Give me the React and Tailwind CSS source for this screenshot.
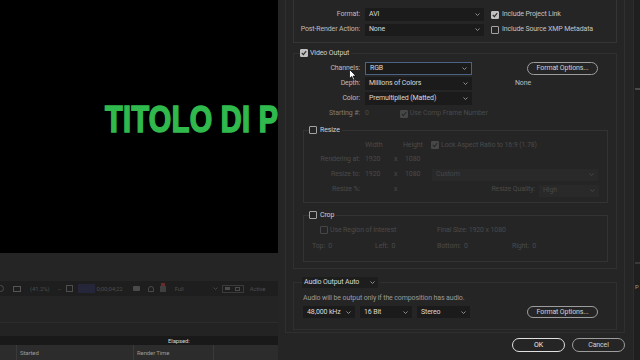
import React from 'react';

const Chevron = ({ color = 'text-[#9a9a9a]' }) => (
  <svg width="5" height="3" viewBox="0 0 5 3" className={color}>
    <polyline points="0.5,0.5 2.5,2.5 4.5,0.5" fill="none" stroke="currentColor" strokeWidth="0.9" />
  </svg>
);

const Check = ({ checked, dim }) => {
  let cls = 'border-[#a3a3a3]';
  if (dim) cls = checked ? 'border-[#474747] bg-[#474747]' : 'border-[#474747]';
  else if (checked) cls = 'border-[#c0c0c0] bg-[#c0c0c0]';
  return (
    <span className={`flex h-[8px] w-[8px] shrink-0 items-center justify-center rounded-[1px] border ${cls}`}>
      {checked && (
        <svg width="6" height="6" viewBox="0 0 6 6">
          <polyline points="0.8,3 2.4,4.6 5.2,1.2" fill="none" stroke={dim ? '#2a2a2a' : '#2b2b2b'} strokeWidth="1.1" />
        </svg>
      )}
    </span>
  );
};

// dropdown field
const Select = ({ value, className, dim }) => (
  <div
    className={`flex items-center justify-between pl-[4px] pr-[4px] ${
      dim ? 'bg-[#292929] text-[#474747]' : 'bg-[#1b1b1b] text-[#dadada]'
    } ${className}`}
  >
    <span>{value}</span>
    <Chevron color={dim ? 'text-[#4a4a4a]' : 'text-[#9a9a9a]'} />
  </div>
);

const PillButton = ({ label, className }) => (
  <div className={`flex items-center justify-center rounded-full border border-[#9d9d9d] text-[#d0d0d0] ${className}`}>
    {label}
  </div>
);

const Cursor = () => (
  <svg width="8" height="12" viewBox="0 0 8 12" className="absolute left-[-16px] top-[7px]">
    <path d="M0.5 0.5 L0.5 9.5 L2.7 7.5 L4.3 11 L5.6 10.4 L4.1 7 L7 7 Z" fill="#ffffff" stroke="#000" strokeWidth="0.7" />
  </svg>
);

const Viewer = () => (
  <div className="flex w-[278px] shrink-0 flex-col">
    <div className="h-[253px] overflow-hidden bg-black pl-[105px] pt-[102px]">
      <div className="origin-left scale-x-[0.8] whitespace-nowrap font-[family-name:'Liberation_Sans',sans-serif] text-[36px] font-bold leading-none tracking-[0.5px] text-[#30b94d] [-webkit-text-stroke:1.6px_#30b94d]">
        TITOLO DI PROGETTO
      </div>
    </div>
    <div className="h-[28px] bg-[#252525]" />
    {/* viewer toolbar */}
    <div className="flex h-[15px] items-center bg-[#1e1e1e] text-[6px] text-[#4d4d4d]">
      <span className="ml-[-3px] h-[7px] w-[7px] rounded-full border border-[#4d4d4d]" />
      <span className="ml-[9px] h-[6px] w-[8px] border border-[#555]" />
      <span className="ml-[9px]">(41.2%)</span>
      <span className="ml-[8px] w-[5px]">–</span>
      <span className="ml-[4px] h-[7px] w-[7px] border border-[#4d4d4d]" />
      <span className="ml-[5px] h-[9px] w-[17px] bg-[#25263a]" />
      <span className="ml-[1px]">0;00;04;22</span>
      <span className="ml-[10px] h-[5px] w-[7px] rounded-[1px] bg-[#4a4a4a]" />
      <span className="ml-[8px] h-[6px] w-[6px] rounded-t-full border border-[#4a4a4a]" />
      <span className="relative ml-[6px] h-[6px] w-[6px] bg-[#3f3f3f]">
        <span className="absolute left-[1px] top-[-3px] h-[3px] w-[4px] bg-[#6a2a2a]" />
      </span>
      <span className="ml-[9px] w-[38px]">Full</span>
      <Chevron color="text-[#4a4a4a]" />
      <span className="ml-[4px] flex h-[8px] w-[22px] items-center justify-around border border-[#3a3a3a]">
        <span className="h-[3px] w-[5px] bg-[#4a4a4a]" />
        <span className="h-[4px] w-[5px] border border-[#4a4a4a]" />
      </span>
      <span className="ml-[6px]">Active</span>
    </div>
    <div className="h-[27px] border-b border-[#2c2c2c] bg-[#242424]" />
    <div className="h-[13px] bg-[#232323]" />
    <div className="flex h-[9px] items-center bg-[#191919] pl-[168px] text-[6px] text-[#d2d2d2]">Elapsed:</div>
    <div className="flex flex-1 items-center bg-[#2c2c2c] text-[6px] text-[#9a9a9a]">
      <span className="ml-[16px] h-full border-l border-[#3a3a3a]" />
      <span className="ml-[3px] w-[113px]">Started</span>
      <span className="h-full border-l border-[#3a3a3a]" />
      <span className="ml-[3px] w-[76px]">Render Time</span>
      <span className="h-full border-l border-[#3a3a3a]" />
    </div>
  </div>
);

const Row = ({ label, children, labelClass = 'text-[#bdbdbd]', labelW = 'w-[66px]' }) => (
  <div className="flex h-[13px] items-center">
    <span className={`${labelW} shrink-0 text-right ${labelClass}`}>{label}</span>
    {children}
  </div>
);

const Dialog = () => (
  <div className="flex w-[355px] shrink-0 flex-col bg-[#252525]">
    <div className="ml-[7px] flex h-[333px] w-[340px] flex-col border-x border-b border-[#2f2f2f]">
      {/* format box */}
      <div className="ml-[7px] flex h-[43px] w-[324px] flex-col gap-[2px] border-x border-b border-[#353535] pt-[8px]">
        <Row label="Format:">
          <Select value="AVI" className="ml-[5px] h-[13px] w-[119px]" />
          <span className="ml-[7px]"><Check checked /></span>
          <span className="ml-[3px] text-[#c4c4c4]">Include Project Link</span>
        </Row>
        <Row label="Post-Render Action:">
          <Select value="None" className="ml-[5px] h-[12px] w-[119px]" />
          <span className="ml-[7px]"><Check /></span>
          <span className="ml-[3px] text-[#c4c4c4]">Include Source XMP Metadata</span>
        </Row>
      </div>

      {/* video output */}
      <fieldset className="ml-[7px] mt-[5px] w-[324px] border border-[#303030] pb-[6px]">
        <legend className="ml-[6px] pr-[2px]">
          <span className="flex h-[10px] items-center gap-[2px] text-[#cfcfcf]">
            <Check checked />
            Video Output
          </span>
        </legend>
        <div className="mt-[4px] flex flex-col gap-[2px]">
          <Row label="Channels:">
            <div className="relative ml-[5px]">
              <Select value="RGB" className="h-[13px] w-[107px] border border-[#4b6387]" />
              <Cursor />
            </div>
            <PillButton label="Format Options..." className="ml-[55px] h-[13px] w-[71px]" />
          </Row>
          <Row label="Depth:">
            <Select value="Millions of Colors" className="ml-[5px] h-[13px] w-[107px]" />
            <span className="ml-[43px] text-[#bdbdbd]">None</span>
          </Row>
          <Row label="Color:">
            <Select value="Premultiplied (Matted)" className="ml-[5px] h-[13px] w-[107px]" />
          </Row>
          <Row label="Starting #:" labelClass="text-[#7d7d7d]">
            <span className="ml-[5px] text-[#4a4a4a]">0</span>
            <span className="ml-[31px]"><Check checked dim /></span>
            <span className="ml-[2px] text-[#4a4a4a]">Use Comp Frame Number</span>
          </Row>
        </div>

        {/* resize */}
        <fieldset className="ml-[9px] mt-[5px] w-[305px] border border-[#333] pb-[6px] text-[#4a4a4a]">
          <legend className="ml-[5px] pr-[2px]">
            <span className="flex h-[10px] items-center gap-[3px] text-[#cfcfcf]">
              <Check />
              Resize
            </span>
          </legend>
          <div className="mt-[5px] flex h-[10px] items-center">
            <span className="ml-[61px] w-[38px]">Width</span>
            <span className="w-[28px]">Height</span>
            <Check checked dim />
            <span className="ml-[2px]">Lock Aspect Ratio to 16:9 (1.78)</span>
          </div>
          <div className="mt-[3px] flex flex-col gap-[2px]">
            <Row label="Rendering at:" labelClass="" labelW="w-[56px]">
              <span className="ml-[5px] w-[27px]">1920</span>
              <span className="w-[11px] pl-[2px]">x</span>
              <span className="pl-[2px]">1080</span>
            </Row>
            <Row label="Resize to:" labelClass="" labelW="w-[56px]">
              <span className="ml-[5px] w-[27px]">1920</span>
              <span className="w-[11px] pl-[2px]">x</span>
              <span className="w-[29px] pl-[2px]">1080</span>
              <Select value="Custom" dim className="h-[12px] w-[166px]" />
            </Row>
            <Row label="Resize %:" labelClass="" labelW="w-[56px]">
              <span className="ml-[5px] w-[27px]" />
              <span className="w-[11px] pl-[2px]">x</span>
              <span className="ml-auto">Resize Quality:</span>
              <Select value="High" dim className="ml-[4px] mr-[8px] mt-[2px] h-[12px] w-[60px]" />
            </Row>
          </div>
        </fieldset>

        {/* crop */}
        <fieldset className="ml-[9px] mt-[7px] w-[305px] border border-[#333] pb-[10px] text-[#4a4a4a]">
          <legend className="ml-[5px] pr-[2px]">
            <span className="flex h-[10px] items-center gap-[3px] text-[#cfcfcf]">
              <Check />
              Crop
            </span>
          </legend>
          <div className="mt-[5px] flex h-[10px] items-center">
            <span className="ml-[16px]"><Check dim /></span>
            <span className="ml-[2px] w-[107px]">Use Region of Interest</span>
            <span>Final Size: 1920 x 1080</span>
          </div>
          <div className="mt-[6px] flex h-[10px] items-center">
            <span className="ml-[8px] w-[63px]">Top:&nbsp;&nbsp;0</span>
            <span className="w-[62px]">Left:&nbsp;&nbsp;0</span>
            <span className="w-[75px]">Bottom:&nbsp;&nbsp;0</span>
            <span>Right:&nbsp;&nbsp;0</span>
          </div>
        </fieldset>
      </fieldset>

      {/* audio */}
      <fieldset className="ml-[7px] mt-[8px] w-[324px] border border-[#303030] pb-[11px]">
        <legend className="ml-[8px] pr-[2px]">
          <span className="flex h-[11px] w-[76px] items-center justify-between bg-[#1d1d1d] pl-[2px] pr-[3px] text-[#d6d6d6]">
            Audio Output Auto
            <Chevron />
          </span>
        </legend>
        <div className="ml-[9px] mt-[5px] flex h-[10px] items-center text-[#9a9a9a]">
          Audio will be output only if the composition has audio.
        </div>
        <div className="mt-[3px] flex h-[12px] items-center">
          <Select value="48,000 kHz" className="ml-[9px] h-[12px] w-[52px]" />
          <Select value="16 Bit" className="ml-[5px] h-[12px] w-[52px]" />
          <Select value="Stereo" className="ml-[5px] h-[12px] w-[53px]" />
          <PillButton label="Format Options..." className="ml-[57px] h-[12px] w-[71px]" />
        </div>
      </fieldset>
    </div>
    <div className="mt-[5px] flex justify-end gap-[7px] pr-[8px]">
      <PillButton label="OK" className="h-[14px] w-[53px] border-[#e0e0e0] text-[#f0f0f0]" />
      <PillButton label="Cancel" className="h-[14px] w-[53px]" />
    </div>
  </div>
);

export default function App() {
  return (
    <div className="flex h-[360px] w-[640px] overflow-hidden bg-[#1d1d1d] font-[family-name:Roboto,sans-serif] text-[7px] leading-none tracking-[-0.12px]">
      <Viewer />
      <Dialog />
      <div className="flex flex-1 flex-col border-l border-[#2d2d2d] bg-[#1f1f1f] pl-[1px] text-[6px] text-[#9a9a9a]">
        <span className="mt-[88px] h-[2px] w-[5px] bg-[#4a4a4a]" />
        <span className="mt-[172px] h-[2px] w-[5px] bg-[#3a3a3a]" />
        <span className="mt-[20px]">P</span>
      </div>
    </div>
  );
}
